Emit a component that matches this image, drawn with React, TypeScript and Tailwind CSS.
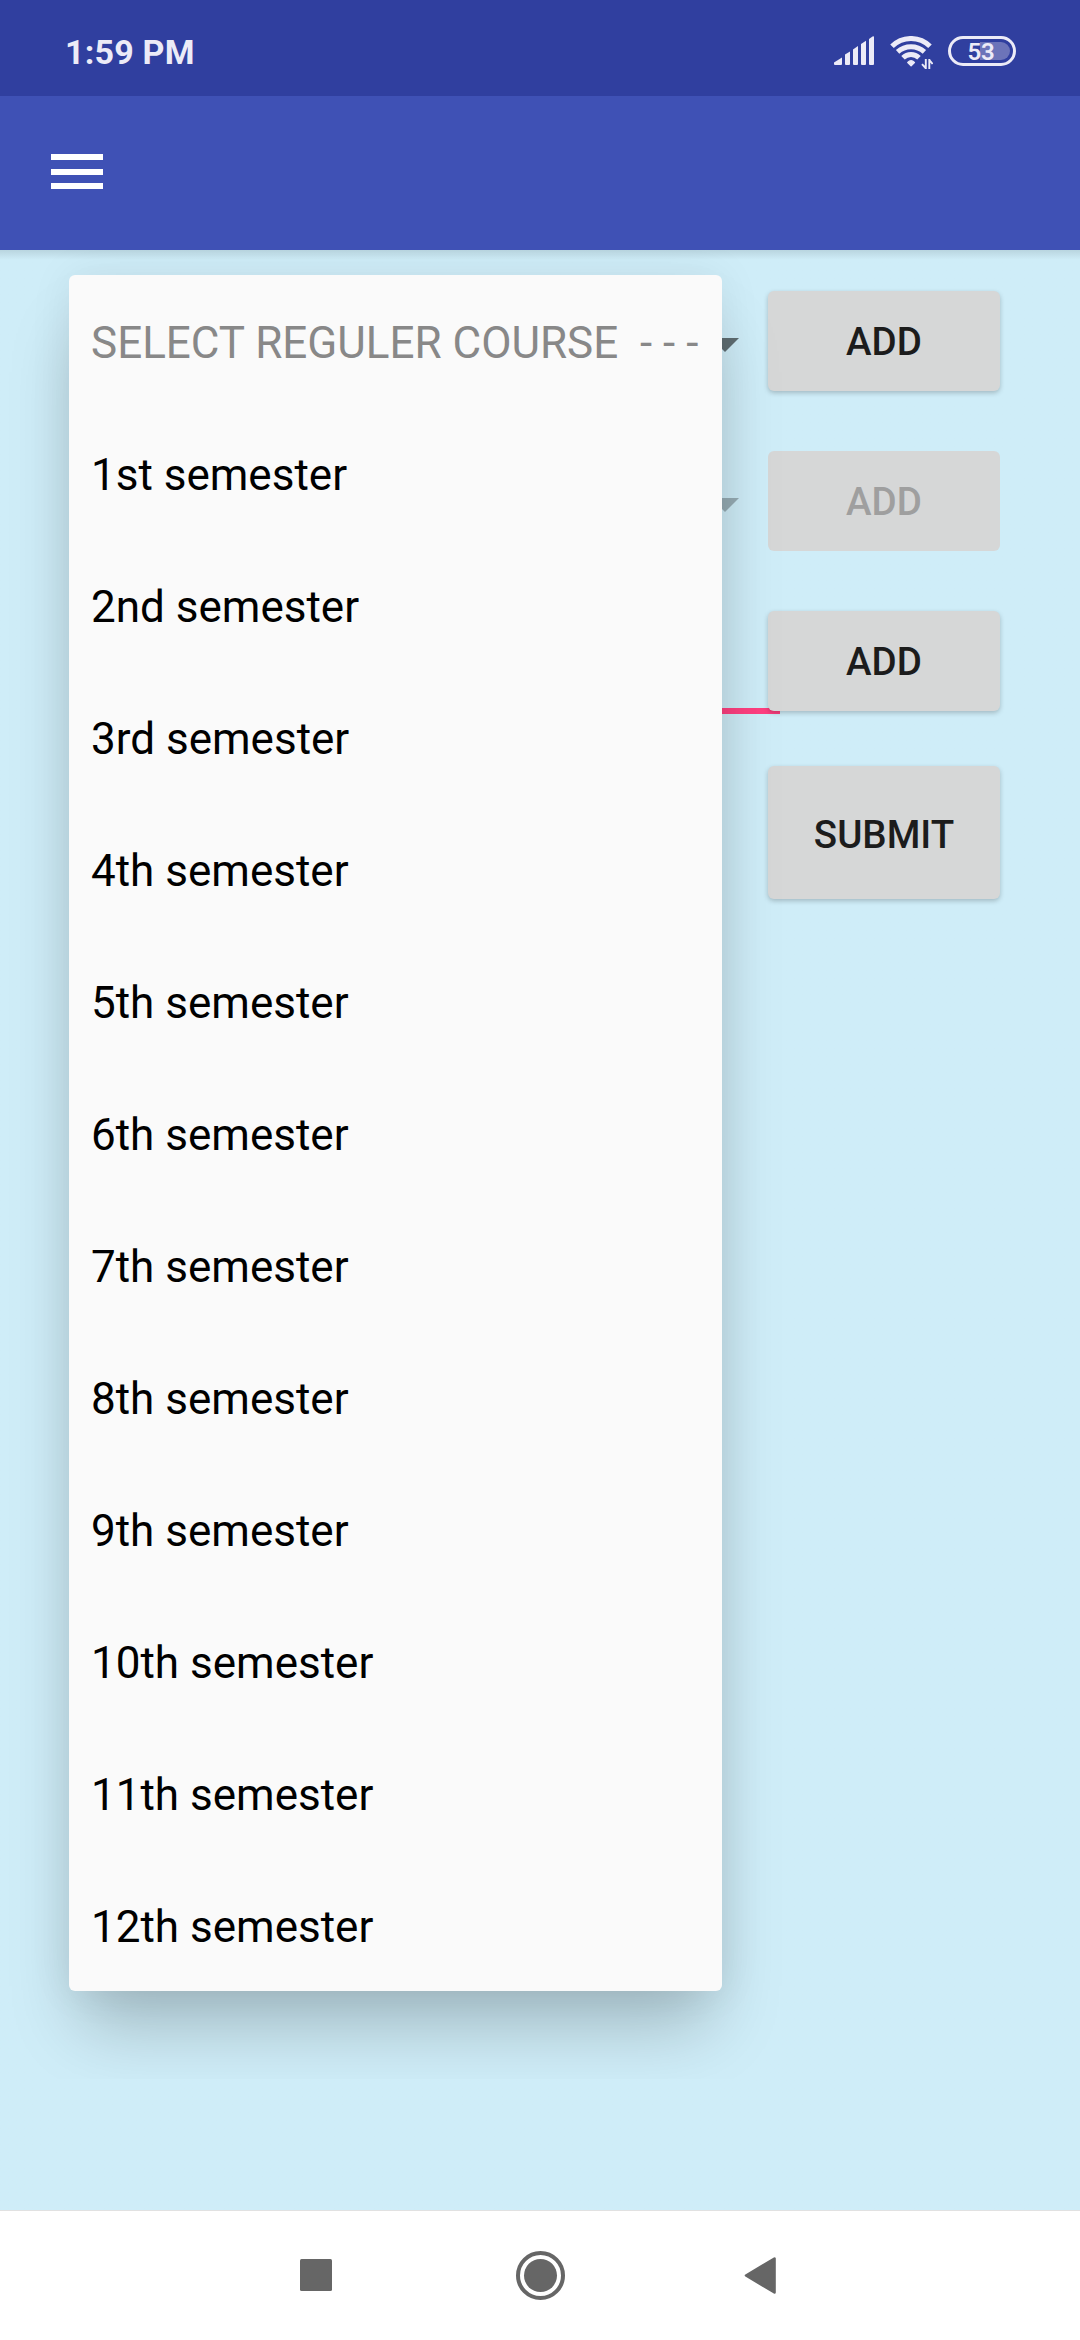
import type { ReactNode } from "react";

const options = [
  "1st semester",
  "2nd semester",
  "3rd semester",
  "4th semester",
  "5th semester",
  "6th semester",
  "7th semester",
  "8th semester",
  "9th semester",
  "10th semester",
  "11th semester",
  "12th semester",
];

function SignalIcon() {
  return (
    <svg className="h-[30px] w-[40px]" viewBox="0 0 40 30" fill="#ecebf7">
      <path d="M0 28V26.5L8 21.5V28Q8 29 7 29H1Q0 29 0 28Z" />
      <path d="M11 28V18.5L16 15.5V28Q16 29 15 29H12Q11 29 11 28Z" />
      <path d="M19 28V13.5L24 10V28Q24 29 23 29H20Q19 29 19 28Z" />
      <path d="M27 28V8L32 4.8V28Q32 29 31 29H28Q27 29 27 28Z" />
      <path d="M35 28V3L38.5 0.5Q40 -0.2 40 1V28Q40 29 39 29H36Q35 29 35 28Z" />
    </svg>
  );
}

function WifiIcon() {
  return (
    <svg className="ml-4 h-[34px] w-[43px]" viewBox="0 0 43 34" fill="none">
      <g stroke="#ecebf7" strokeWidth="5">
        <path d="M2 10.3A27 27 0 0 1 40 10.3" />
        <path d="M7.6 15.8A20 20 0 0 1 34.4 15.8" />
        <path d="M13 21.7A11.5 11.5 0 0 1 29 21.7" />
      </g>
      <path d="M17.8 26.4Q21 23 24.4 26.4L21.1 29.8Z" fill="#ecebf7" stroke="#ecebf7" strokeWidth="1.4" strokeLinejoin="round" />
      <g stroke="#ecebf7" strokeWidth="1.9">
        <path d="M35.8 23V33M32 28.2L35.6 32" />
        <path d="M39.3 33V23M42.6 28L39.4 24.2" />
      </g>
    </svg>
  );
}

function Battery() {
  return (
    <div className="relative ml-[15px] flex h-[30px] w-[68px] items-center justify-center rounded-full border-3 border-[#ecebf7] text-[24px] leading-none font-semibold text-[#ecebf7]">
      <span className="absolute top-[3px] right-[3px] h-[18px] w-[30px] rounded-r-full bg-[#6c74b9]" />
      <span className="relative top-px -left-px tracking-[-0.3px]">53</span>
    </div>
  );
}

function StatusBar() {
  return (
    <header className="flex h-24 items-start bg-[#303f9f] pr-16 pl-[65px]">
      <span className="mt-[32px] text-[34px] leading-10 font-bold tracking-[0.2px] text-[#ecebf7]">1:59 PM</span>
      <div className="mt-9 ml-auto flex items-start">
        <SignalIcon />
        <WifiIcon />
        <Battery />
      </div>
    </header>
  );
}

function AppBar() {
  return (
    <div className="flex h-[154px] items-start bg-[#3f51b5] pl-[51px]">
      <div className="mt-[58px] flex h-[35px] w-[52px] flex-col justify-between">
        <span className="h-[6px] bg-white" />
        <span className="h-[6px] bg-white" />
        <span className="h-[6px] bg-white" />
      </div>
    </div>
  );
}

function Caret({ muted = false }: { muted?: boolean }) {
  return (
    <svg className="mt-2 mr-[29px] h-[14px] w-7" viewBox="0 0 28 14">
      <path d="M0 0H28L14 14Z" fill={muted ? "#97adb5" : "#5f6d72"} />
    </svg>
  );
}

function Button({ children, disabled = false, tall = false }: { children: ReactNode; disabled?: boolean; tall?: boolean }) {
  return (
    <button
      disabled={disabled}
      className={`relative flex w-[232px] items-center justify-center rounded-[6px] bg-[#d6d7d7] text-[38.5px] leading-none font-medium ${
        disabled ? "text-[#9f9f9f]" : "text-[#1c1c1c] shadow-[0_2px_5px_rgba(0,0,0,0.22)]"
      } ${tall ? "h-[133px] pt-1.5" : "h-[100px] pt-[3px]"}`}
    >
      {children}
    </button>
  );
}

function CourseForm() {
  return (
    <form className="flex flex-col pt-[41px] pr-20">
      <div className="flex items-center justify-end">
        <Caret />
        <Button>ADD</Button>
      </div>
      <div className="mt-[60px] flex items-center justify-end">
        <Caret muted />
        <Button disabled>ADD</Button>
      </div>
      <div className="relative mt-[60px] flex justify-end">
        <span className="absolute top-[97px] left-[69px] h-[6px] w-[711px] bg-[#ff4081]" />
        <Button>ADD</Button>
      </div>
      <div className="mt-[55px] flex justify-end">
        <Button tall>SUBMIT</Button>
      </div>
    </form>
  );
}

function CourseMenu() {
  return (
    <div className="pointer-events-none absolute inset-x-0 top-0 h-[1829px] overflow-hidden">
      <ul className="absolute top-[25px] left-[69px] w-[653px] rounded-[6px] bg-[#fafafa] text-[44px] leading-[52px] text-black shadow-[0_46px_66px_-12px_rgba(0,0,0,0.22),0_0_44px_rgba(0,0,0,0.07)]">
        <li className="flex h-[132px] items-center pt-1 pl-[22px] whitespace-pre text-[#888888]">{"SELECT REGULER COURSE  - - -"}</li>
        {options.map((option) => (
          <li key={option} className="flex h-[132px] items-center pt-1 pl-[22px]">
            {option}
          </li>
        ))}
      </ul>
    </div>
  );
}

function NavBar() {
  return (
    <nav className="flex h-[130px] items-start border-t border-[#e1e1e1] bg-white">
      <svg className="mt-10 ml-[300px] h-[50px] w-[476px]" viewBox="300 2251 476 50" fill="#666666">
        <rect x="300" y="2259" width="32" height="32" rx="1.5" />
        <circle cx="540.5" cy="2275.5" r="22.5" fill="none" stroke="#666666" strokeWidth="4" />
        <circle cx="540.5" cy="2275.5" r="16.5" />
        <path d="M746 2275.5L774.5 2258.5V2292.5Z" stroke="#666666" strokeWidth="2.6" strokeLinejoin="round" />
      </svg>
    </nav>
  );
}

export default function App() {
  return (
    <div className="flex h-[2340px] w-[1080px] flex-col overflow-hidden bg-[#cfedf8] font-[Roboto,sans-serif]">
      <StatusBar />
      <AppBar />
      <main className="relative flex-1 bg-linear-to-b from-[#b9d5df] to-[#cfedf8] to-[10px]">
        <CourseForm />
        <CourseMenu />
      </main>
      <NavBar />
    </div>
  );
}
